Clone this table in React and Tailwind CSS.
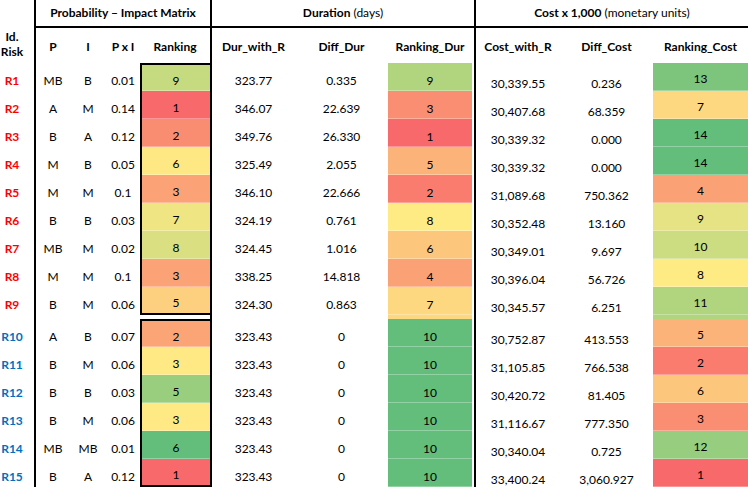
import React from "react";

const durColor = {
  1: "#F8696B", 2: "#F97C6F", 3: "#FA8E72", 4: "#FBA176", 5: "#FCB37A",
  6: "#FDC67D", 7: "#FED880", 8: "#FFEB84", 9: "#B1D47F", 10: "#63BE7B",
};

const costColor = {
  1: "#F8696B", 2: "#F97C6F", 3: "#FA8E72", 4: "#FBA176", 5: "#FCB37A",
  6: "#FDC67D", 7: "#FED880", 8: "#FFEB84", 9: "#E5E383", 10: "#CBDC81",
  11: "#B1D47F", 12: "#97CD7E", 13: "#7DC57D", 14: "#63BE7B",
};

const rows = [
  { id: "R1", p: "MB", i: "B", pxi: "0.01", rk: 9, rkc: "#C6DA80", dur: "323.77", dd: "0.335", rd: 9, cost: "30,339.55", dc: "0.236", rc: 13 },
  { id: "R2", p: "A", i: "M", pxi: "0.14", rk: 1, rkc: "#F8696B", dur: "346.07", dd: "22.639", rd: 3, cost: "30,407.68", dc: "68.359", rc: 7 },
  { id: "R3", p: "B", i: "A", pxi: "0.12", rk: 2, rkc: "#F98D72", dur: "349.76", dd: "26.330", rd: 1, cost: "30,339.32", dc: "0.000", rc: 14 },
  { id: "R4", p: "M", i: "B", pxi: "0.05", rk: 6, rkc: "#FEE883", dur: "325.49", dd: "2.055", rd: 5, cost: "30,339.32", dc: "0.000", rc: 14 },
  { id: "R5", p: "M", i: "M", pxi: "0.1", rk: 3, rkc: "#FBA276", dur: "346.10", dd: "22.666", rd: 2, cost: "31,089.68", dc: "750.362", rc: 4 },
  { id: "R6", p: "B", i: "B", pxi: "0.03", rk: 7, rkc: "#EFE683", dur: "324.19", dd: "0.761", rd: 8, cost: "30,352.48", dc: "13.160", rc: 9 },
  { id: "R7", p: "MB", i: "M", pxi: "0.02", rk: 8, rkc: "#DAE082", dur: "324.45", dd: "1.016", rd: 6, cost: "30,349.01", dc: "9.697", rc: 10 },
  { id: "R8", p: "M", i: "M", pxi: "0.1", rk: 3, rkc: "#FBA276", dur: "338.25", dd: "14.818", rd: 4, cost: "30,396.04", dc: "56.726", rc: 8 },
  { id: "R9", p: "B", i: "M", pxi: "0.06", rk: 5, rkc: "#FDD07F", dur: "324.30", dd: "0.863", rd: 7, cost: "30,345.57", dc: "6.251", rc: 11 },
  { id: "R10", p: "A", i: "B", pxi: "0.07", rk: 2, rkc: "#FBA576", dur: "323.43", dd: "0", rd: 10, cost: "30,752.87", dc: "413.553", rc: 5 },
  { id: "R11", p: "B", i: "M", pxi: "0.06", rk: 3, rkc: "#FFE984", dur: "323.43", dd: "0", rd: 10, cost: "31,105.85", dc: "766.538", rc: 2 },
  { id: "R12", p: "B", i: "B", pxi: "0.03", rk: 5, rkc: "#99CE7F", dur: "323.43", dd: "0", rd: 10, cost: "30,420.72", dc: "81.405", rc: 6 },
  { id: "R13", p: "B", i: "M", pxi: "0.06", rk: 3, rkc: "#FFE984", dur: "323.43", dd: "0", rd: 10, cost: "31,116.67", dc: "777.350", rc: 3 },
  { id: "R14", p: "MB", i: "MB", pxi: "0.01", rk: 6, rkc: "#63BE7B", dur: "323.43", dd: "0", rd: 10, cost: "30,340.04", dc: "0.725", rc: 12 },
  { id: "R15", p: "B", i: "A", pxi: "0.12", rk: 1, rkc: "#F8696B", dur: "323.43", dd: "0", rd: 10, cost: "33,400.24", dc: "3,060.927", rc: 1 },
];

const sep = "shadow-[inset_0_-1px_0_rgba(255,255,255,0.3)]";

const Row = ({ r, idx }) => {
  const top = idx === 0 || idx === 9;
  const bottom = idx === 8 || idx === 14;
  return (
    <div className="flex h-[28px] text-[12px] text-black">
      <div className={`w-[34px] pr-[10px] flex items-center justify-center font-bold translate-y-[4px] ${idx < 9 ? "text-[#FF0000]" : "text-[#0070C0]"}`}>
        {r.id}
      </div>
      <div className="flex w-[178px] border-x-2 border-black">
        <div className="w-[34px] flex items-center justify-center translate-y-[4px]">{r.p}</div>
        <div className="w-[36px] flex items-center justify-center translate-y-[4px]">{r.i}</div>
        <div className="w-[34px] flex items-center justify-center translate-y-[4px]">{r.pxi}</div>
        <div
          className={`w-[70px] flex items-center justify-center border-l-2 border-black ${top ? "border-t-2" : ""} ${bottom ? "border-b-2" : sep}`}
          style={{ backgroundColor: r.rkc }}
        >
          <span className="translate-y-[3px]">{r.rk}</span>
        </div>
      </div>
      <div className="flex w-[264px] border-r-2 border-black">
        <div className="w-[83px] flex items-center justify-center translate-y-[4px]">{r.dur}</div>
        <div className="w-[93px] flex items-center justify-center translate-y-[4px]">{r.dd}</div>
        <div className={`w-[84px] flex items-center justify-center ${sep}`} style={{ backgroundColor: durColor[r.rd] }}>
          <span className="translate-y-[4px]">{r.rd}</span>
        </div>
        <div className="w-[2px]" />
      </div>
      <div className="flex w-[272px]">
        <div className="w-[84px] flex items-center justify-center translate-y-[7px]">{r.cost}</div>
        <div className="w-[93px] flex items-center justify-center translate-y-[7px]">{r.dc}</div>
        <div className={`w-[95px] flex items-center justify-center ${sep}`} style={{ backgroundColor: costColor[r.rc] }}>
          <span className="translate-y-[2px]">{r.rc}</span>
        </div>
      </div>
    </div>
  );
};

const Spacer = ({ r }) => (
  <div className="flex h-[4px]">
    <div className="w-[34px]" />
    <div className="w-[178px] border-x-2 border-black" />
    <div className="flex w-[264px] border-r-2 border-black">
      <div className="w-[176px]" />
      <div className="w-[84px]" style={{ backgroundColor: durColor[r.rd] }} />
    </div>
    <div className="flex w-[272px]">
      <div className="w-[177px]" />
      <div className="w-[95px]" style={{ backgroundColor: costColor[r.rc] }} />
    </div>
  </div>
);

const Sub = ({ w, children }) => (
  <div className={`${w} flex items-center justify-center font-bold translate-y-[1px]`}>{children}</div>
);

export default function App() {
  return (
    <div className="w-[748px] h-[490px] bg-white overflow-hidden font-[Lato,'Open_Sans',sans-serif] text-black">
      <div className="flex h-[63px] text-[12px]">
        <div className="w-[34px] pr-[10px] flex flex-col items-center justify-end pb-[4px] font-bold leading-[15px]">
          <span>Id.</span>
          <span>Risk</span>
        </div>
        <div className="w-[178px] border-x-2 border-black flex flex-col">
          <div className="h-[28px] border-b-2 border-black flex items-center justify-center font-bold">
            Probability – Impact Matrix
          </div>
          <div className="flex flex-1">
            <Sub w="w-[34px]">P</Sub>
            <Sub w="w-[36px]">I</Sub>
            <Sub w="w-[34px]">P x I</Sub>
            <Sub w="w-[70px]">Ranking</Sub>
          </div>
        </div>
        <div className="w-[264px] border-r-2 border-black flex flex-col">
          <div className="h-[28px] border-b-2 border-black flex items-center justify-center">
            <span className="font-bold">Duration</span>&nbsp;(days)
          </div>
          <div className="flex flex-1">
            <Sub w="w-[83px]">Dur_with_R</Sub>
            <Sub w="w-[93px]">Diff_Dur</Sub>
            <Sub w="w-[84px]">Ranking_Dur</Sub>
          </div>
        </div>
        <div className="w-[272px] flex flex-col">
          <div className="h-[28px] border-b-2 border-black flex items-center justify-center">
            <span className="font-bold">Cost x 1,000</span>&nbsp;(monetary units)
          </div>
          <div className="flex flex-1">
            <Sub w="w-[84px]">Cost_with_R</Sub>
            <Sub w="w-[93px]">Diff_Cost</Sub>
            <Sub w="w-[95px]">Ranking_Cost</Sub>
          </div>
        </div>
      </div>
      {rows.slice(0, 9).map((r, i) => (
        <Row key={r.id} r={r} idx={i} />
      ))}
      <Spacer r={rows[8]} />
      {rows.slice(9).map((r, i) => (
        <Row key={r.id} r={r} idx={i + 9} />
      ))}
    </div>
  );
}
